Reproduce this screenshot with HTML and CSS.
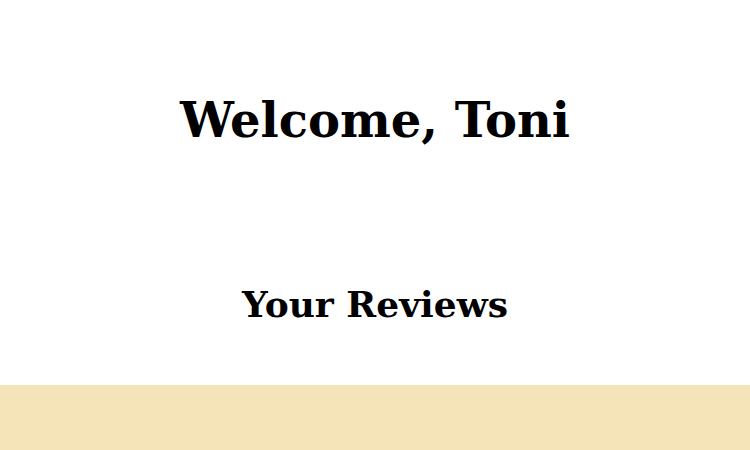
FILE: index.html
```html
<!DOCTYPE html>
<html>
<head>
<meta charset="utf-8">
<link rel="stylesheet" href="styles.css">
</head>
<body>
<main class="page">
  <section class="welcome">
    <h1 class="title">Welcome, Toni</h1>
  </section>
  <section class="reviews">
    <h2 class="subtitle">Your Reviews</h2>
  </section>
  <footer class="band"></footer>
</main>
</body>
</html>
```

FILE: styles.css
```css
html, body {
  margin: 0;
  padding: 0;
  background: #ffffff;
}
.page {
  display: flex;
  flex-direction: column;
  height: 450px;
  font-family: "DejaVu Serif", "Liberation Serif", serif;
  color: #000;
}
.welcome {
  height: 240px;
  display: flex;
  align-items: center;
  justify-content: center;
}
.title {
  margin: 0;
  font-size: 48px;
  font-weight: bold;
  line-height: 1;
}
.reviews {
  height: 145px;
  box-sizing: border-box;
  padding-bottom: 18px;
  display: flex;
  align-items: center;
  justify-content: center;
}
.subtitle {
  margin: 0;
  font-size: 36px;
  font-weight: bold;
  line-height: 1;
}
.band {
  flex: 1;
  background: #f5e4b8;
}
```
